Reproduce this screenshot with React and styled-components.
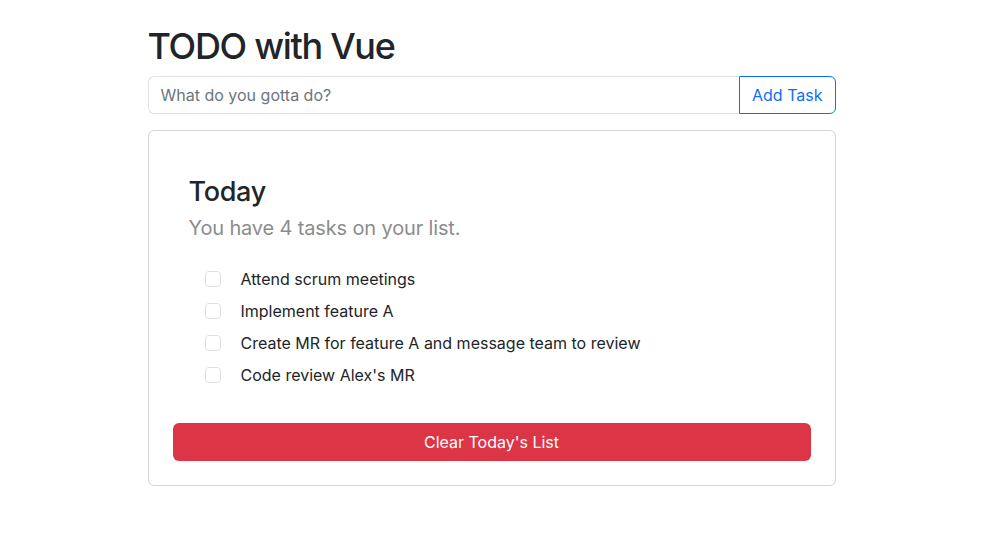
import styled, { createGlobalStyle } from "styled-components";

const GlobalStyle = createGlobalStyle`
  body {
    margin: 0;
    background: #fff;
    color: #212529;
    font-family: Inter, "Noto Sans", "Liberation Sans", sans-serif;
    font-size: 16px;
    line-height: 1.5;
  }
  * { box-sizing: border-box; }
`;

const tasks = [
  "Attend scrum meetings",
  "Implement feature A",
  "Create MR for feature A and message team to review",
  "Code review Alex's MR",
];

export default function App() {
  return (
    <>
      <GlobalStyle />
      <Container>
        <Title>TODO with Vue</Title>
        <InputGroup>
          <TaskInput placeholder="What do you gotta do?" />
          <AddButton>Add Task</AddButton>
        </InputGroup>
        <Card>
          <Section>
            <DayTitle>Today</DayTitle>
            <Lead>You have {tasks.length} tasks on your list.</Lead>
            <TaskList>
              {tasks.map((task) => (
                <TaskRow key={task}>
                  <Check type="checkbox" />
                  <span>{task}</span>
                </TaskRow>
              ))}
            </TaskList>
          </Section>
          <ClearButton>Clear Today's List</ClearButton>
        </Card>
      </Container>
    </>
  );
}

const Container = styled.div`
  width: 688px;
  margin: 0 auto;
  padding-top: 25px;
`;

const Title = styled.h1`
  margin: 0 0 8px;
  font-size: 36px;
  font-weight: 500;
  line-height: 1.2;
  letter-spacing: -1.3px;
`;

const InputGroup = styled.div`
  display: flex;
  height: 38px;
`;

const TaskInput = styled.input`
  flex: 1;
  min-width: 0;
  padding: 6px 12px;
  font: inherit;
  color: #212529;
  border: 1px solid #dee2e6;
  border-right: none;
  border-radius: 6px 0 0 6px;
  outline: none;
  &::placeholder {
    color: #6c757d;
  }
`;

const AddButton = styled.button`
  padding: 6px 12px;
  font: inherit;
  color: #0d6efd;
  background: #fff;
  border: 1px solid #0d6efd;
  border-radius: 0 6px 6px 0;
`;

const Card = styled.div`
  margin-top: 16px;
  border: 1px solid #d5d5d5;
  border-radius: 6px;
  padding: 24px;
`;

const Section = styled.div`
  padding: 21px 16px 16px;
`;

const DayTitle = styled.h3`
  margin: 0 0 4px;
  font-size: 27px;
  font-weight: 500;
  line-height: 1.2;
  letter-spacing: -0.3px;
`;

const Lead = styled.p`
  margin: 0 0 20px;
  font-size: 20px;
  font-weight: 400;
  letter-spacing: -0.15px;
  color: #8c8c8c;
`;

const TaskList = styled.ul`
  list-style: none;
  margin: 0;
  padding: 0 0 0 16px;
`;

const TaskRow = styled.li`
  display: flex;
  align-items: center;
  gap: 20px;
  height: 32px;
  font-size: 16px;
`;

const Check = styled.input`
  appearance: none;
  width: 16px;
  height: 16px;
  margin: 0;
  border: 1px solid #dee2e6;
  border-radius: 4px;
  background: #fff;
`;

const ClearButton = styled.button`
  display: block;
  width: 100%;
  height: 38px;
  margin-top: 16px;
  font: inherit;
  color: #fff;
  background: #dc3545;
  border: none;
  border-radius: 6px;
`;
